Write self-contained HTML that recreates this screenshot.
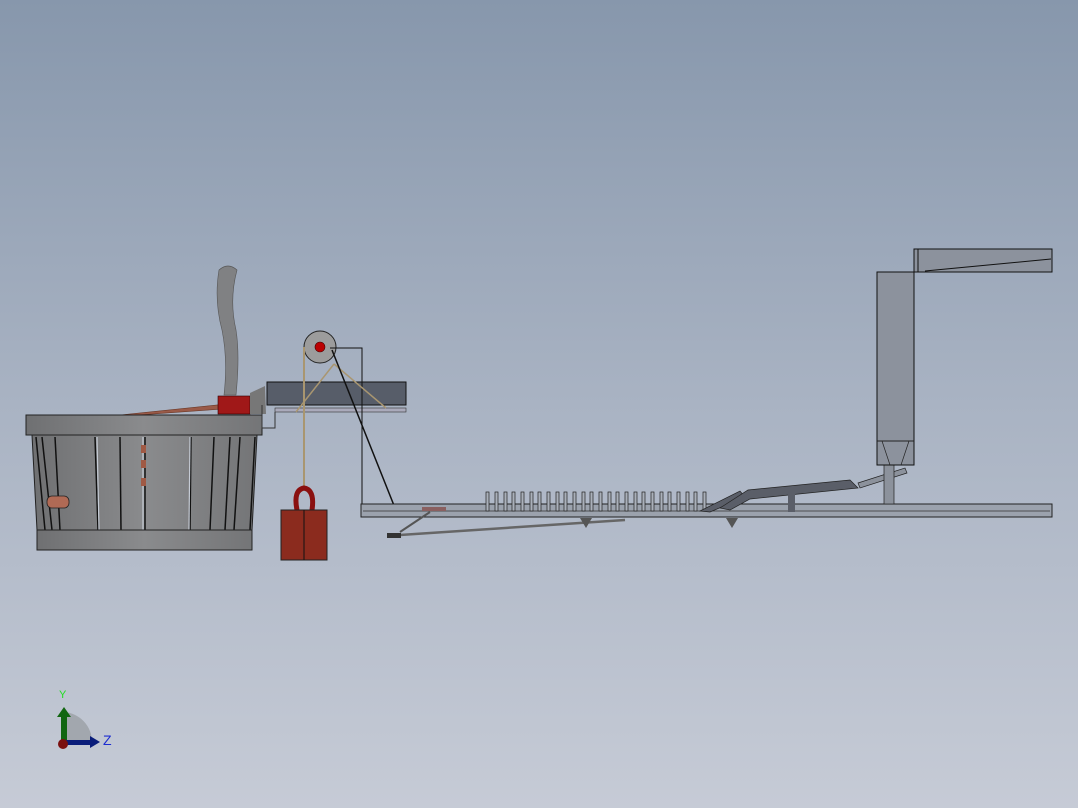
<!DOCTYPE html>
<html><head><style>
html,body{margin:0;padding:0}
body{width:1078px;height:808px;overflow:hidden;background:linear-gradient(#8797ac,#a9b3c3 50%,#c6cbd6);font-family:"Liberation Sans",sans-serif}
svg{position:absolute;left:0;top:0}
</style></head><body>
<svg width="1078" height="808" viewBox="0 0 1078 808">
<defs>
<linearGradient id="g1" x1="0" x2="1"><stop offset="0" stop-color="#6f7072"/><stop offset=".5" stop-color="#8a8b8d"/><stop offset="1" stop-color="#747577"/></linearGradient>
</defs>
<!-- chimney -->
<path d="M219,270 Q228,262 237,270 Q229,300 236,330 Q240,355 236,395 L224,395 Q228,360 222,330 Q214,300 219,270Z" fill="#808183" stroke="#555" stroke-width=".6"/>
<!-- rod -->
<path d="M120,415 L265,400 L265,406 L125,416Z" fill="#9a5a48" stroke="#6a3a2a" stroke-width=".6"/>
<rect x="218" y="396" width="32" height="18" fill="#a01818" stroke="#300" stroke-width=".6"/>
<path d="M250,393 L265,386 L266,414 L250,414Z" fill="#777"/>
<!-- bucket -->
<rect x="26" y="415" width="236" height="20" fill="url(#g1)" stroke="#222"/>
<path d="M32,435 L257,435 L252,530 L37,530Z" fill="url(#g1)" stroke="#222"/>
<g stroke="#111" stroke-width="1.5">
<line x1="36" y1="437" x2="45" y2="530"/><line x1="42" y1="437" x2="52" y2="530"/><line x1="55" y1="437" x2="60" y2="530"/>
<line x1="95" y1="437" x2="98" y2="530"/><line x1="120" y1="437" x2="121" y2="530"/><line x1="145" y1="437" x2="145" y2="530"/>
<line x1="191" y1="437" x2="190" y2="530"/><line x1="214" y1="437" x2="210" y2="530"/><line x1="230" y1="437" x2="225" y2="530"/><line x1="240" y1="437" x2="234" y2="530"/><line x1="255" y1="437" x2="250" y2="530"/>
</g>
<g stroke="#c6ccd6" stroke-width="1.2"><line x1="97" y1="437" x2="99" y2="530"/><line x1="143" y1="437" x2="143" y2="530"/><line x1="190" y1="437" x2="189" y2="530"/></g>
<g fill="#a05a45"><rect x="141" y="445" width="5" height="8"/><rect x="141" y="460" width="5" height="8"/><rect x="141" y="478" width="5" height="8"/></g>
<rect x="47" y="496" width="22" height="12" rx="5" fill="#b06a55" stroke="#222" stroke-width=".8"/>
<rect x="37" y="530" width="215" height="20" fill="url(#g1)" stroke="#222"/>
<!-- bracket -->
<path d="M262,405 L262,428 L275,428 L275,412" fill="none" stroke="#333"/>
<!-- conveyor -->
<rect x="267" y="382" width="139" height="23" fill="#575d69" stroke="#111"/>
<rect x="275" y="408" width="131" height="4" fill="#aab" stroke="#333" stroke-width=".6"/>
<!-- pulley -->
<circle cx="320" cy="347" r="16" fill="#9c9c9c" stroke="#222"/>
<circle cx="320" cy="347" r="5" fill="#b00" stroke="#400" stroke-width=".6"/>
<polyline points="330,348 362,348 362,504" fill="none" stroke="#111"/>
<line x1="304" y1="347" x2="304" y2="490" stroke="#a99670" stroke-width="2"/>
<line x1="334" y1="364" x2="296" y2="412" stroke="#a99670" stroke-width="1.5"/>
<line x1="334" y1="364" x2="386" y2="408" stroke="#a99670" stroke-width="1.5"/>
<line x1="332" y1="350" x2="395" y2="508" stroke="#111" stroke-width="1.5"/>
<path d="M297,510 Q293,490 304,488 Q315,490 312,510" fill="none" stroke="#8a1010" stroke-width="5"/>
<rect x="281" y="510" width="46" height="50" fill="#8b2b1e" stroke="#222"/>
<line x1="304" y1="510" x2="304" y2="560" stroke="#111"/>
<!-- base rail -->
<rect x="361" y="504" width="691" height="13" fill="#9ba2ad" stroke="#222"/>
<line x1="363" y1="511" x2="1050" y2="511" stroke="#333" stroke-width=".7"/>
<g fill="#aab0ba" stroke="#222" stroke-width=".7">
<rect x="486" y="492" width="3" height="19"/><rect x="495" y="492" width="3" height="19"/><rect x="504" y="492" width="3" height="19"/><rect x="512" y="492" width="3" height="19"/><rect x="521" y="492" width="3" height="19"/><rect x="530" y="492" width="3" height="19"/><rect x="538" y="492" width="3" height="19"/><rect x="547" y="492" width="3" height="19"/><rect x="556" y="492" width="3" height="19"/><rect x="564" y="492" width="3" height="19"/><rect x="573" y="492" width="3" height="19"/><rect x="582" y="492" width="3" height="19"/><rect x="590" y="492" width="3" height="19"/><rect x="599" y="492" width="3" height="19"/><rect x="608" y="492" width="3" height="19"/><rect x="616" y="492" width="3" height="19"/><rect x="625" y="492" width="3" height="19"/><rect x="634" y="492" width="3" height="19"/><rect x="642" y="492" width="3" height="19"/><rect x="651" y="492" width="3" height="19"/><rect x="660" y="492" width="3" height="19"/><rect x="668" y="492" width="3" height="19"/><rect x="677" y="492" width="3" height="19"/><rect x="686" y="492" width="3" height="19"/><rect x="694" y="492" width="3" height="19"/><rect x="703" y="492" width="3" height="19"/>
</g>
<rect x="422" y="507" width="24" height="4" fill="#8a6060"/>
<!-- lower rod -->
<line x1="400" y1="535" x2="625" y2="520" stroke="#666" stroke-width="2.5"/>
<line x1="400" y1="532" x2="430" y2="512" stroke="#555" stroke-width="2"/>
<rect x="387" y="533" width="14" height="5" fill="#333"/>
<path d="M580,518 L592,518 L586,528Z" fill="#555"/>
<path d="M726,518 L738,518 L732,528Z" fill="#555"/>
<!-- ramp -->
<path d="M700,511 L740,491 L745,497 L710,512Z" fill="#5a5e68" stroke="#222" stroke-width=".7"/>
<path d="M720,508 L748,490 L850,480 L858,488 L750,499 L730,510Z" fill="#5a5e68" stroke="#222" stroke-width=".7"/>
<rect x="788" y="492" width="7" height="20" fill="#5a5e68"/>
<path d="M858,483 L905,468 L907,473 L860,488Z" fill="#8c929c" stroke="#222" stroke-width=".7"/>
<!-- hopper -->
<rect x="884" y="465" width="10" height="39" fill="#8c929c" stroke="#222" stroke-width=".7"/>
<rect x="877" y="272" width="37" height="193" fill="#8c929d" stroke="#111"/>
<line x1="877" y1="441" x2="914" y2="441" stroke="#222"/>
<path d="M882,441 L890,465 M909,441 L901,465" stroke="#222" stroke-width=".7"/>
<rect x="914" y="249" width="138" height="23" fill="#8c929d" stroke="#111"/>
<line x1="918" y1="249" x2="918" y2="272" stroke="#111"/>
<line x1="925" y1="271" x2="1051" y2="259" stroke="#111"/>
<!-- axis -->
<path d="M64,742 L64,712 A30,30 0 0 1 92,742Z" fill="#a2a7ae"/>
<rect x="61" y="715" width="6" height="27" fill="#116611"/>
<path d="M57,717 L64,707 L71,717Z" fill="#116611"/>
<rect x="64" y="740" width="28" height="5" fill="#0a1d7a"/>
<path d="M90,736 L100,742 L90,748Z" fill="#0a1d7a"/>
<circle cx="63" cy="744" r="5" fill="#7a1010"/>
<text x="59" y="698" font-size="11" fill="#2d2">Y</text>
<text x="103" y="745" font-size="14" fill="#1d2dd0">Z</text>
</svg>
</body></html>
